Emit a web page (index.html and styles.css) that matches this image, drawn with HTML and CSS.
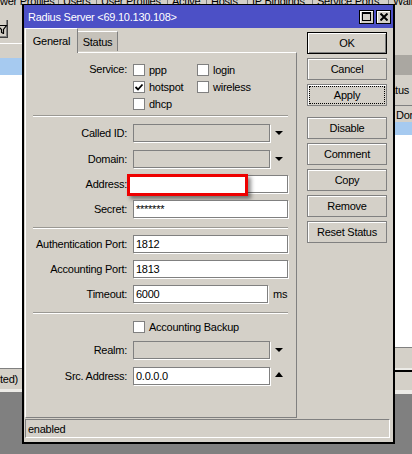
FILE: index.html
```html
<!DOCTYPE html>
<html>
<head>
<meta charset="utf-8">
<title>Radius Server</title>
<link rel="stylesheet" href="styles.css">
</head>
<body>
<div class="desk">
  <div class="strip">
    <div class="strip-in">
      <span class="bt t1">Power Profiles</span>
      <span class="bt t2">Users</span>
      <span class="bt t3">User Profiles</span>
      <span class="bt t4">Active</span>
      <span class="bt t5">Hosts</span>
      <span class="bt t6">IP Bindings</span>
      <span class="bt t7">Service Ports</span>
      <span class="bt t8">Walled Garden</span>
    </div>
  </div>
  <div class="under">
    <div class="lwin">
      <div class="ltool">
        <div class="fbtn">
          <svg width="8" height="9" viewBox="0 0 8 9"><path d="M-3 0.5H6.5L3.5 4.5V8.5L1.5 7.5V4.5Z" fill="none" stroke="#000" stroke-width="1.2"/></svg>
        </div>
      </div>
      <div class="lhdr"></div>
      <div class="lsel"></div>
      <div class="lwhite"></div>
      <div class="lstatus"><span>1 item (1 selected)</span></div>
    </div>
    <div class="mid"></div>
    <div class="rwin">
      <div class="rtop"></div>
      <div class="rband"></div>
      <div class="rtool"><span>Status</span></div>
      <div class="rhdr"><span>Domain</span></div>
      <div class="rsel"></div>
      <div class="rwhite"></div>
      <div class="rstat1"></div>
      <div class="rstat2"></div>
    </div>
  </div>

  <div class="dialog">
    <div class="titlebar">
      <span class="title">Radius Server &lt;69.10.130.108&gt;</span>
      <div class="tbtns">
        <span class="tbtn"><svg width="9" height="9" viewBox="0 0 9 9"><rect x="0.5" y="0.5" width="8" height="8" fill="none" stroke="#000"/><rect x="0" y="0" width="9" height="2" fill="#000"/></svg></span>
        <span class="tbtn"><svg width="8" height="8" viewBox="0 0 8 8"><path d="M0.5 0.5L7.5 7.5M7.5 0.5L0.5 7.5" stroke="#000" stroke-width="2"/></svg></span>
      </div>
    </div>
    <div class="dbody">
      <div class="tabs-area">
        <div class="tabs">
          <div class="tab active">General</div>
          <div class="tab inactive">Status</div>
        </div>
        <div class="panel">
          <div class="row svc">
            <div class="lbl">Service:</div>
            <div class="checks">
              <div class="chk"><span class="box"></span>ppp</div>
              <div class="chk"><span class="box"><svg width="10" height="10" viewBox="0 0 10 10"><path d="M1.5 5L4 7.5L8.5 2.5" fill="none" stroke="#000" stroke-width="1.8"/></svg></span>hotspot</div>
              <div class="chk"><span class="box"></span>dhcp</div>
              <div class="chk"><span class="box"></span>login</div>
              <div class="chk"><span class="box"></span>wireless</div>
            </div>
          </div>
          <div class="sep sep-a"></div>
          <div class="row"><div class="lbl">Called ID:</div><div class="ctl"><div class="field short dis"></div><span class="arrow"><span class="tri-down"></span></span></div></div>
          <div class="row mt8"><div class="lbl">Domain:</div><div class="ctl"><div class="field short dis"></div><span class="arrow"><span class="tri-down"></span></span></div></div>
          <div class="row"><div class="lbl">Address:</div><div class="ctl"><div class="field"></div><span class="redmark"></span></div></div>
          <div class="row"><div class="lbl">Secret:</div><div class="ctl"><div class="field">*******</div></div></div>
          <div class="sep sep-b"></div>
          <div class="row mt6"><div class="lbl">Authentication Port:</div><div class="ctl"><div class="field">1812</div></div></div>
          <div class="row"><div class="lbl">Accounting Port:</div><div class="ctl"><div class="field">1813</div></div></div>
          <div class="row"><div class="lbl">Timeout:</div><div class="ctl"><div class="field timeout">6000</div><span class="unit">ms</span></div></div>
          <div class="sep sep-b"></div>
          <div class="row cbrow"><div class="lbl"></div><div class="ctl"><div class="chk"><span class="box"></span>Accounting Backup</div></div></div>
          <div class="row mt8"><div class="lbl">Realm:</div><div class="ctl"><div class="field short dis"></div><span class="arrow"><span class="tri-down"></span></span></div></div>
          <div class="row mt8"><div class="lbl">Src. Address:</div><div class="ctl"><div class="field short">0.0.0.0</div><span class="arrow"><span class="tri-up"></span></span></div></div>
        </div>
      </div>
      <div class="buttons">
        <div class="btn default">OK</div>
        <div class="btn">Cancel</div>
        <div class="btn focus">Apply</div>
        <div class="btn spaced">Disable</div>
        <div class="btn">Comment</div>
        <div class="btn">Copy</div>
        <div class="btn">Remove</div>
        <div class="btn">Reset Status</div>
      </div>
    </div>
    <div class="statusbar"><div class="status-box">enabled</div></div>
  </div>
</div>
</body>
</html>
```
FILE: styles.css
```css
* { box-sizing: border-box; }
html, body { margin: 0; padding: 0; }
body {
  width: 412px;
  height: 454px;
  overflow: hidden;
  background: #808080;
  font-family: "Liberation Sans", Arial, sans-serif;
  font-size: 11px;
  letter-spacing: -0.25px;
  color: #000;
}
.desk { position: relative; width: 412px; height: 454px; overflow: hidden; }

/* background window tab strip */
.strip { height: 7px; overflow: hidden; background: #d4d0c8; }
.strip-in { display: flex; margin-top: -6px; height: 14px; line-height: 14px; white-space: nowrap; }
.bt { flex: none; padding-left: 4px; border-right: 1px solid #808080; overflow: hidden; }
.t1 { margin-left: -13px; width: 72px; padding-left: 0; }
.t2 { width: 38px; }
.t3 { width: 71px; }
.t4 { width: 39px; }
.t5 { width: 41px; }
.t6 { width: 65px; }
.t7 { width: 76px; }
.t8 { flex: 1 0 auto; border-right: 0; }

.under { display: flex; height: 447px; }
.mid { flex: 1; }

/* left background window */
.lwin { width: 22px; flex: none; display: flex; flex-direction: column; }
.ltool { height: 36px; background: #d4d0c8; padding-top: 13px; }
.fbtn {
  width: 8px; height: 18px; padding-top: 5px;
  border-right: 1px solid #404040; border-bottom: 1px solid #404040;
  box-shadow: inset -1px -1px #808080;
}
.fbtn svg { display: block; }
.lhdr { height: 15px; background: #d4d0c8; border-top: 1px solid #fff; }
.lsel { height: 17px; background: #a6caf0; }
.lwhite { height: 293px; background: #fff; }
.lstatus {
  height: 24px; background: #d4d0c8; border-top: 1px solid #808080;
  box-shadow: inset 0 -3px #ecebe7;
  display: flex; justify-content: flex-end; padding: 4px 4px 0 0;
  white-space: nowrap; line-height: 13px; overflow: hidden;
}

/* right background window */
.rwin { width: 17px; flex: none; display: flex; flex-direction: column; overflow: hidden; }
.rtop { height: 48px; background: #d4d0c8; }
.rband { height: 20px; background: #aaa7a1; }
.rtool { height: 30px; background: #d4d0c8; display: flex; align-items: center; justify-content: flex-end; padding-right: 3px; white-space: nowrap; }
.rhdr { height: 17px; background: #d4d0c8; border-top: 1px solid #808080; padding: 3px 0 0 1px; white-space: nowrap; line-height: 12px; }
.rsel { height: 13px; background: #a6caf0; }
.rwhite { height: 212px; background: #fff; }
.rstat1 { height: 23px; background: #d4d0c8; border-top: 1px solid #808080; box-shadow: inset 0 -2px #ecebe7; }
.rstat2 { height: 24px; background: #d4d0c8; border-top: 2px solid #000; box-shadow: inset 0 -4px #ecebe7; }

/* dialog */
.dialog {
  position: absolute; left: 22px; top: 4px;
  width: 373px; height: 440px;
  border: 2px solid #000; border-top-width: 1px;
  background: #d4d0c8;
  display: flex; flex-direction: column;
}
.titlebar {
  height: 23px; flex: none; background: #4c50c6; color: #fff;
  display: flex; align-items: center; padding-left: 4px;
}
.title { line-height: 14px; white-space: nowrap; }
.tbtns { margin-left: auto; margin-right: 2px; display: flex; gap: 2px; }
.tbtn {
  width: 15px; height: 14px; border: 1px solid #000; background: #d4d0c8;
  box-shadow: inset 1px 1px #fff;
  display: flex; align-items: center; justify-content: center;
}
.tbtn svg { display: block; }

.dbody { display: flex; height: 390px; flex: none; }
.tabs-area { margin-left: 1px; width: 272px; flex: none; display: flex; flex-direction: column; }
.tabs { height: 24px; flex: none; display: flex; align-items: flex-end; }
.tab {
  display: flex; align-items: center; justify-content: center;
  border-top: 1px solid #fff; border-left: 1px solid #fff; border-right: 1px solid #808080;
}
.tab.active { width: 53px; height: 25px; margin-bottom: -1px; position: relative; z-index: 1; background: #d4d0c8; }
.tab.inactive { width: 40px; height: 20px; margin-bottom: 1px; background: #c6c2ba; border-left: 0; }

.panel {
  height: 366px; flex: none;
  border: 1px solid; border-color: #fff #808080 #808080 #fff;
  padding: 8px 8px 0 7px;
  display: flex; flex-direction: column;
}
.row { display: flex; align-items: center; margin-top: 7px; }
.row.mt8 { margin-top: 8px; }
.row.mt6 { margin-top: 6px; }
.row.svc { align-items: flex-start; margin-top: 0; }
.row.cbrow { height: 12px; }
.lbl { width: 94px; flex: none; margin-right: 6px; text-align: right; white-space: nowrap; }
.svc .lbl { line-height: 17px; }
.ctl { flex: 1; display: flex; align-items: center; position: relative; }

.checks { display: grid; grid-template-columns: 64px auto; grid-template-rows: repeat(3, 17px); grid-auto-flow: column; }
.chk { display: flex; align-items: center; gap: 4px; white-space: nowrap; }
.box {
  width: 12px; height: 12px; flex: none; border: 1px solid #808080; background: #fff;
  display: flex; align-items: center; justify-content: center;
}
.box svg { display: block; }

.sep { height: 2px; flex: none; border-top: 1px solid #9a9893; border-bottom: 1px solid #fff; }
.sep-a { margin-top: 3px; }
.sep-b { margin-top: 9px; }

.field {
  flex: 1; height: 18px; border: 1px solid #808080; box-shadow: 1px 1px 0 #fff;
  background: #fff; padding: 1px 2px 0; line-height: 15px; white-space: nowrap; overflow: hidden;
}
.field.short { flex: none; width: 137px; }
.field.timeout { flex: none; width: 135px; }
.field.dis { background: #d4d0c8; }
.unit { margin-left: 5px; }
.arrow { width: 18px; flex: none; display: flex; justify-content: center; }
.tri-down { width: 0; height: 0; border-left: 4px solid transparent; border-right: 4px solid transparent; border-top: 4px solid #000; }
.tri-up { width: 0; height: 0; border-left: 4px solid transparent; border-right: 4px solid transparent; border-bottom: 5px solid #000; margin-bottom: 3px; }

.redmark {
  position: absolute; left: -6px; top: -1px; width: 121px; height: 22px;
  border: 3px solid #ee0000; background: #fff;
  box-shadow: 3px 3px 4px rgba(0, 0, 0, 0.45);
}

.buttons { margin-left: 10px; width: 80px; flex: none; padding-top: 4px; display: flex; flex-direction: column; gap: 4px; }
.btn {
  height: 22px; flex: none; border: 1px solid #808080; background: #d4d0c8;
  box-shadow: inset 1px 1px #fff;
  display: flex; align-items: center; justify-content: center; white-space: nowrap;
}
.btn.default { border-color: #000; box-shadow: inset 1px 1px #fff, inset -1px -1px #808080; }
.btn.focus { outline: 1px dotted #000; outline-offset: -3px; }
.btn.spaced { margin-top: 7px; }

.statusbar { flex: 1; padding: 1px 3px 0 1px; }
.status-box {
  height: 19px; border: 1px solid; border-color: #808080 #fff #fff #808080;
  padding: 2px 0 0 2px; line-height: 14px;
}
```
